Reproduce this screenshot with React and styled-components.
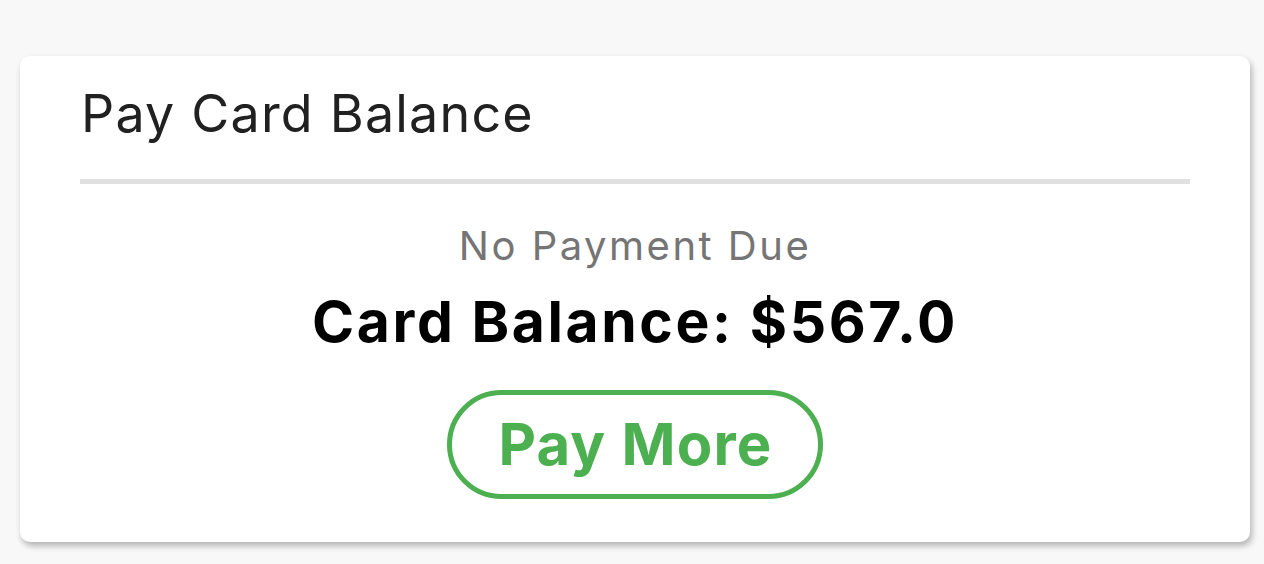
import React from "react";
import styled, { createGlobalStyle } from "styled-components";

const Global = createGlobalStyle`
  html, body { margin: 0; padding: 0; background: #f8f8f8; }
  body { font-family: Inter, "Noto Sans", Roboto, sans-serif; }
`;

const Page = styled.div`
  padding: 56px 14px 22px 20px;
`;

const Card = styled.section`
  width: 1230px;
  box-sizing: border-box;
  background: #fff;
  border-radius: 10px;
  box-shadow: 2px 4px 6px rgba(0, 0, 0, 0.28);
  padding: 27px 60px 43px 60px;
  display: flex;
  flex-direction: column;
`;

const Title = styled.h2`
  margin: 0;
  font-size: 52px;
  line-height: 62px;
  font-weight: 400;
  letter-spacing: 1.2px;
  color: #212121;
  padding-left: 1px;
`;

const Divider = styled.hr`
  margin: 34px 0 0 0;
  border: none;
  height: 5px;
  background: #e0e0e0;
`;

const Body = styled.div`
  display: flex;
  flex-direction: column;
  align-items: center;
  padding-top: 38px;
`;

const Status = styled.div`
  font-size: 40px;
  line-height: 47px;
  letter-spacing: 2.5px;
  color: #757575;
`;

const Balance = styled.div`
  margin-top: 18px;
  font-size: 57px;
  line-height: 69px;
  font-weight: 700;
  letter-spacing: 2.6px;
  color: #000;
`;

const PayButton = styled.button`
  margin-top: 34px;
  font-family: inherit;
  font-size: 58px;
  line-height: 70px;
  font-weight: 700;
  letter-spacing: 1.2px;
  color: #4caf50;
  background: #fff;
  border: 5px solid #4caf50;
  border-radius: 999px;
  padding: 14px 45px 15px 46px;
  cursor: pointer;
`;

export default function App() {
  return (
    <>
      <Global />
      <Page>
        <Card>
          <Title>Pay Card Balance</Title>
          <Divider />
          <Body>
            <Status>No Payment Due</Status>
            <Balance>Card Balance: $567.0</Balance>
            <PayButton>Pay More</PayButton>
          </Body>
        </Card>
      </Page>
    </>
  );
}
